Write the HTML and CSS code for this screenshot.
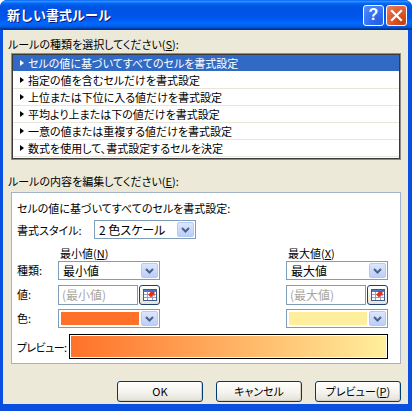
FILE: index.html
```html
<!DOCTYPE html>
<html>
<head>
    <title>新しい書式ルール</title>
    <link rel="stylesheet" href="styles.css">
</head>
<body>
<div class="window">
    <div class="titlebar">
        <span class="title">新しい書式ルール</span>
        <div class="caption-buttons">
            <span class="cap help">?</span>
            <span class="cap close">
                <svg width="13" height="13" viewBox="0 0 13 13"><path d="M2 2 L11 11 M11 2 L2 11" stroke="#fff" stroke-width="2.2" stroke-linecap="square"/></svg>
            </span>
        </div>
    </div>

    <div class="client">
        <div class="label">ルールの種類を選択してください(<u>S</u>):</div>
        <ul class="rulelist">
            <li class="selected"><i class="arrow"></i>セルの値に基づいてすべてのセルを書式設定</li>
            <li><i class="arrow"></i>指定の値を含むセルだけを書式設定</li>
            <li><i class="arrow"></i>上位または下位に入る値だけを書式設定</li>
            <li><i class="arrow"></i>平均より上または下の値だけを書式設定</li>
            <li><i class="arrow"></i>一意の値または重複する値だけを書式設定</li>
            <li><i class="arrow"></i>数式を使用して、書式設定するセルを決定</li>
        </ul>

        <div class="label label-edit">ルールの内容を編集してください(<u>E</u>):</div>
        <div class="group">
            <div class="intro">セルの値に基づいてすべてのセルを書式設定:</div>
            <div class="style-row">
                <span class="style-label">書式スタイル:</span>
                <div class="combo style-combo">
                    <span class="combo-text">2 色スケール</span>
                    <span class="drop"><svg width="9" height="6" viewBox="0 0 9 6"><path d="M1 1 L4.5 4.5 L8 1" fill="none" stroke="#4D6185" stroke-width="2"/></svg></span>
                </div>
            </div>

            <div class="grid">
                <span></span>
                <span class="head">最小値(<u>N</u>)</span>
                <span></span>
                <span class="head">最大値(<u>X</u>)</span>

                <span class="rlabel">種類:</span>
                <div class="combo">
                    <span class="combo-text">最小値</span>
                    <span class="drop"><svg width="9" height="6" viewBox="0 0 9 6"><path d="M1 1 L4.5 4.5 L8 1" fill="none" stroke="#4D6185" stroke-width="2"/></svg></span>
                </div>
                <span></span>
                <div class="combo">
                    <span class="combo-text">最大値</span>
                    <span class="drop"><svg width="9" height="6" viewBox="0 0 9 6"><path d="M1 1 L4.5 4.5 L8 1" fill="none" stroke="#4D6185" stroke-width="2"/></svg></span>
                </div>

                <span class="rlabel">値:</span>
                <div class="valrow">
                    <div class="edit">(最小値)</div>
                    <span class="pick"><svg width="14" height="12" viewBox="0 0 14 12"><rect x="0.5" y="0.5" width="13" height="11" fill="#fff" stroke="#3B5C8C"/><rect x="1" y="1" width="12" height="2" fill="#4A78C0"/><path d="M1 5.5 H13 M1 8.5 H13 M4.5 3 V11 M9.5 3 V11" stroke="#8EA3C4"/><path d="M6 2 L11.5 2 L11.5 7.5 L10 6 L8 8.5 L5 5.5 L7.5 3.5 Z" fill="#E0301E"/></svg></span>
                </div>
                <span></span>
                <div class="valrow">
                    <div class="edit">(最大値)</div>
                    <span class="pick"><svg width="14" height="12" viewBox="0 0 14 12"><rect x="0.5" y="0.5" width="13" height="11" fill="#fff" stroke="#3B5C8C"/><rect x="1" y="1" width="12" height="2" fill="#4A78C0"/><path d="M1 5.5 H13 M1 8.5 H13 M4.5 3 V11 M9.5 3 V11" stroke="#8EA3C4"/><path d="M6 2 L11.5 2 L11.5 7.5 L10 6 L8 8.5 L5 5.5 L7.5 3.5 Z" fill="#E0301E"/></svg></span>
                </div>

                <span class="rlabel">色:</span>
                <div class="combo">
                    <span class="swatch min-color"></span>
                    <span class="drop"><svg width="9" height="6" viewBox="0 0 9 6"><path d="M1 1 L4.5 4.5 L8 1" fill="none" stroke="#4D6185" stroke-width="2"/></svg></span>
                </div>
                <span></span>
                <div class="combo">
                    <span class="swatch max-color"></span>
                    <span class="drop"><svg width="9" height="6" viewBox="0 0 9 6"><path d="M1 1 L4.5 4.5 L8 1" fill="none" stroke="#4D6185" stroke-width="2"/></svg></span>
                </div>
            </div>

            <div class="preview-row">
                <span class="preview-label">プレビュー:</span>
                <div class="preview"><div class="gradient"></div></div>
            </div>
        </div>

        <div class="buttons">
            <button type="button">OK</button>
            <button type="button">キャンセル</button>
            <button type="button">プレビュー(<u>P</u>)</button>
        </div>
    </div>
</div>
</body>
</html>
```

FILE: styles.css
```css
body{
    margin: 0;
    width: 412px;
    height: 411px;
    overflow: hidden;
    background: #ffffff;
    font-family: "Noto Sans CJK JP", "Liberation Sans", sans-serif;
    font-size: 11px;
    font-feature-settings: "palt";
    color: #000;
}

.window{
    width: 412px;
    height: 411px;
    display: flex;
    flex-direction: column;
    background: #0A4FE0;
    border-radius: 7px 7px 0 0;
    overflow: hidden;
}

.titlebar{
    height: 30px;
    flex: none;
    display: flex;
    align-items: center;
    padding: 0 5px 0 7px;
    background: linear-gradient(to bottom, #0058EE 0%, #3593FF 4%, #288EFF 6%, #127DFF 8%, #036FFC 10%, #0262EE 14%, #0057E5 20%, #0054E3 24%, #0055EB 56%, #005BF5 66%, #026AFE 76%, #0062EF 86%, #0052D6 92%, #0040AB 94%, #003092 100%);
}

.title{
    color: #fff;
    font-weight: bold;
    font-size: 13px;
    font-feature-settings: normal;
    text-shadow: 1px 1px #0A1883;
    line-height: 16px;
}

.caption-buttons{
    margin-left: auto;
    display: flex;
    gap: 2px;
}

.cap{
    width: 21px;
    height: 21px;
    box-sizing: border-box;
    border: 1px solid #fff;
    border-radius: 3px;
    display: flex;
    align-items: center;
    justify-content: center;
    color: #fff;
}

.help{
    background: radial-gradient(circle at 80% 85%, #2A5FE0 0%, #2E6DF2 40%, #5A8EF7 100%);
    font-family: "Liberation Sans", sans-serif;
    font-weight: bold;
    font-size: 16px;
}

.close{
    background: radial-gradient(circle at 80% 85%, #C9400D 0%, #DC5628 45%, #EE8060 100%);
}

.client{
    flex: 1;
    margin: 0 4px 7px 3px;
    padding: 7px 7px 0 8px;
    background: #ECE9D8;
    display: flex;
    flex-direction: column;
}

.label{
    line-height: 14px;
    margin-left: -3px;
}

.rulelist{
    list-style: none;
    margin: 2px 0 0 0;
    padding: 1px 0 0 0;
    height: 107px;
    box-sizing: border-box;
    background: #fff;
    border: 1px solid #8C8B85;
    box-shadow: inset 1px 1px 0 #3A3A3A, inset -1px -1px 0 #3A3A3A;
    overflow: hidden;
}

.rulelist li{
    height: 17px;
    margin: 0 1px;
    box-sizing: border-box;
    border-bottom: 1px solid #E8E6DA;
    display: flex;
    align-items: center;
    padding-left: 7px;
    line-height: 16px;
}

.rulelist li.selected{
    background: #316AC5;
    color: #fff;
    border-bottom-color: #fff;
}

.arrow{
    width: 0;
    height: 0;
    border-top: 3.5px solid transparent;
    border-bottom: 3.5px solid transparent;
    border-left: 4px solid #000;
    margin-right: 4px;
}

.selected .arrow{
    border-left-color: #fff;
}

.label-edit{
    margin-top: 14px;
}

.group{
    margin-top: 4px;
    height: 172px;
    box-sizing: border-box;
    border: 1px solid #A2B3C9;
    background: #fff;
    padding: 8px 12px 0 5px;
}

.intro{
    line-height: 14px;
}

.style-row{
    margin-top: 5px;
    display: flex;
    align-items: center;
}

.style-label{
    width: 77px;
}

.combo{
    height: 19px;
    box-sizing: border-box;
    border: 1px solid #7F9DB9;
    background: #fff;
    display: flex;
    align-items: center;
    padding: 1px;
}

.style-combo{
    width: 102px;
}

.combo-text{
    flex: 1;
    padding-left: 3px;
    font-size: 12px;
    line-height: 15px;
}

.drop{
    width: 17px;
    height: 15px;
    box-sizing: border-box;
    border: 1px solid #B7CAF5;
    border-radius: 2px;
    background: linear-gradient(to bottom, #DCE6FE, #BACEF8);
    display: flex;
    align-items: center;
    justify-content: center;
    margin-left: auto;
}

.grid{
    margin-top: 7px;
    display: grid;
    grid-template-columns: 41px 102px 1fr 102px;
    grid-template-rows: 15px 24px 24px 20px;
    align-items: start;
}

.head{
    line-height: 14px;
    padding-left: 2px;
}

.rlabel{
    line-height: 19px;
}

.valrow{
    display: flex;
    gap: 1px;
}

.edit{
    width: 80px;
    height: 20px;
    box-sizing: border-box;
    border: 1px solid #7F9DB9;
    color: #A7A6A0;
    font-size: 12px;
    line-height: 18px;
    padding-left: 3px;
}

.pick{
    width: 21px;
    height: 20px;
    box-sizing: border-box;
    border: 1px solid #1C3F74;
    border-radius: 3px;
    background: linear-gradient(to bottom, #FFFFFF, #E6E3D6);
    display: flex;
    align-items: center;
    justify-content: center;
}

.swatch{
    width: 80px;
    height: 13px;
    margin: 0 2px 0 1px;
}

.min-color{
    background: #FF7128;
}

.max-color{
    background: #FFEF9C;
}

.preview-row{
    margin-top: 5px;
    display: flex;
    align-items: center;
}

.preview-label{
    flex: none;
    width: 52px;
    white-space: nowrap;
    letter-spacing: -0.6px;
}

.preview{
    width: 321px;
    height: 25px;
    box-sizing: border-box;
    border: 1px solid #000;
    padding: 1px;
    background: #fff;
}

.gradient{
    height: 100%;
    background: linear-gradient(to right, #FF7128, #FFEF9C);
}

.buttons{
    margin-top: 17px;
    display: flex;
    justify-content: flex-end;
    gap: 13px;
}

button{
    width: 86px;
    height: 21px;
    box-sizing: border-box;
    border: 1px solid #003C74;
    border-radius: 3px;
    background: linear-gradient(to bottom, #FFFFFF 0%, #F4F3EE 55%, #E3E0D5 100%);
    box-shadow: inset -1px -1px 0 #D6D0C5;
    font-family: "Noto Sans CJK JP", "Liberation Sans", sans-serif;
    font-size: 11px;
    font-feature-settings: "palt";
    color: #000;
    padding: 0;
    line-height: 19px;
}

u{
    text-decoration: underline;
    text-underline-offset: 1px;
}
```
